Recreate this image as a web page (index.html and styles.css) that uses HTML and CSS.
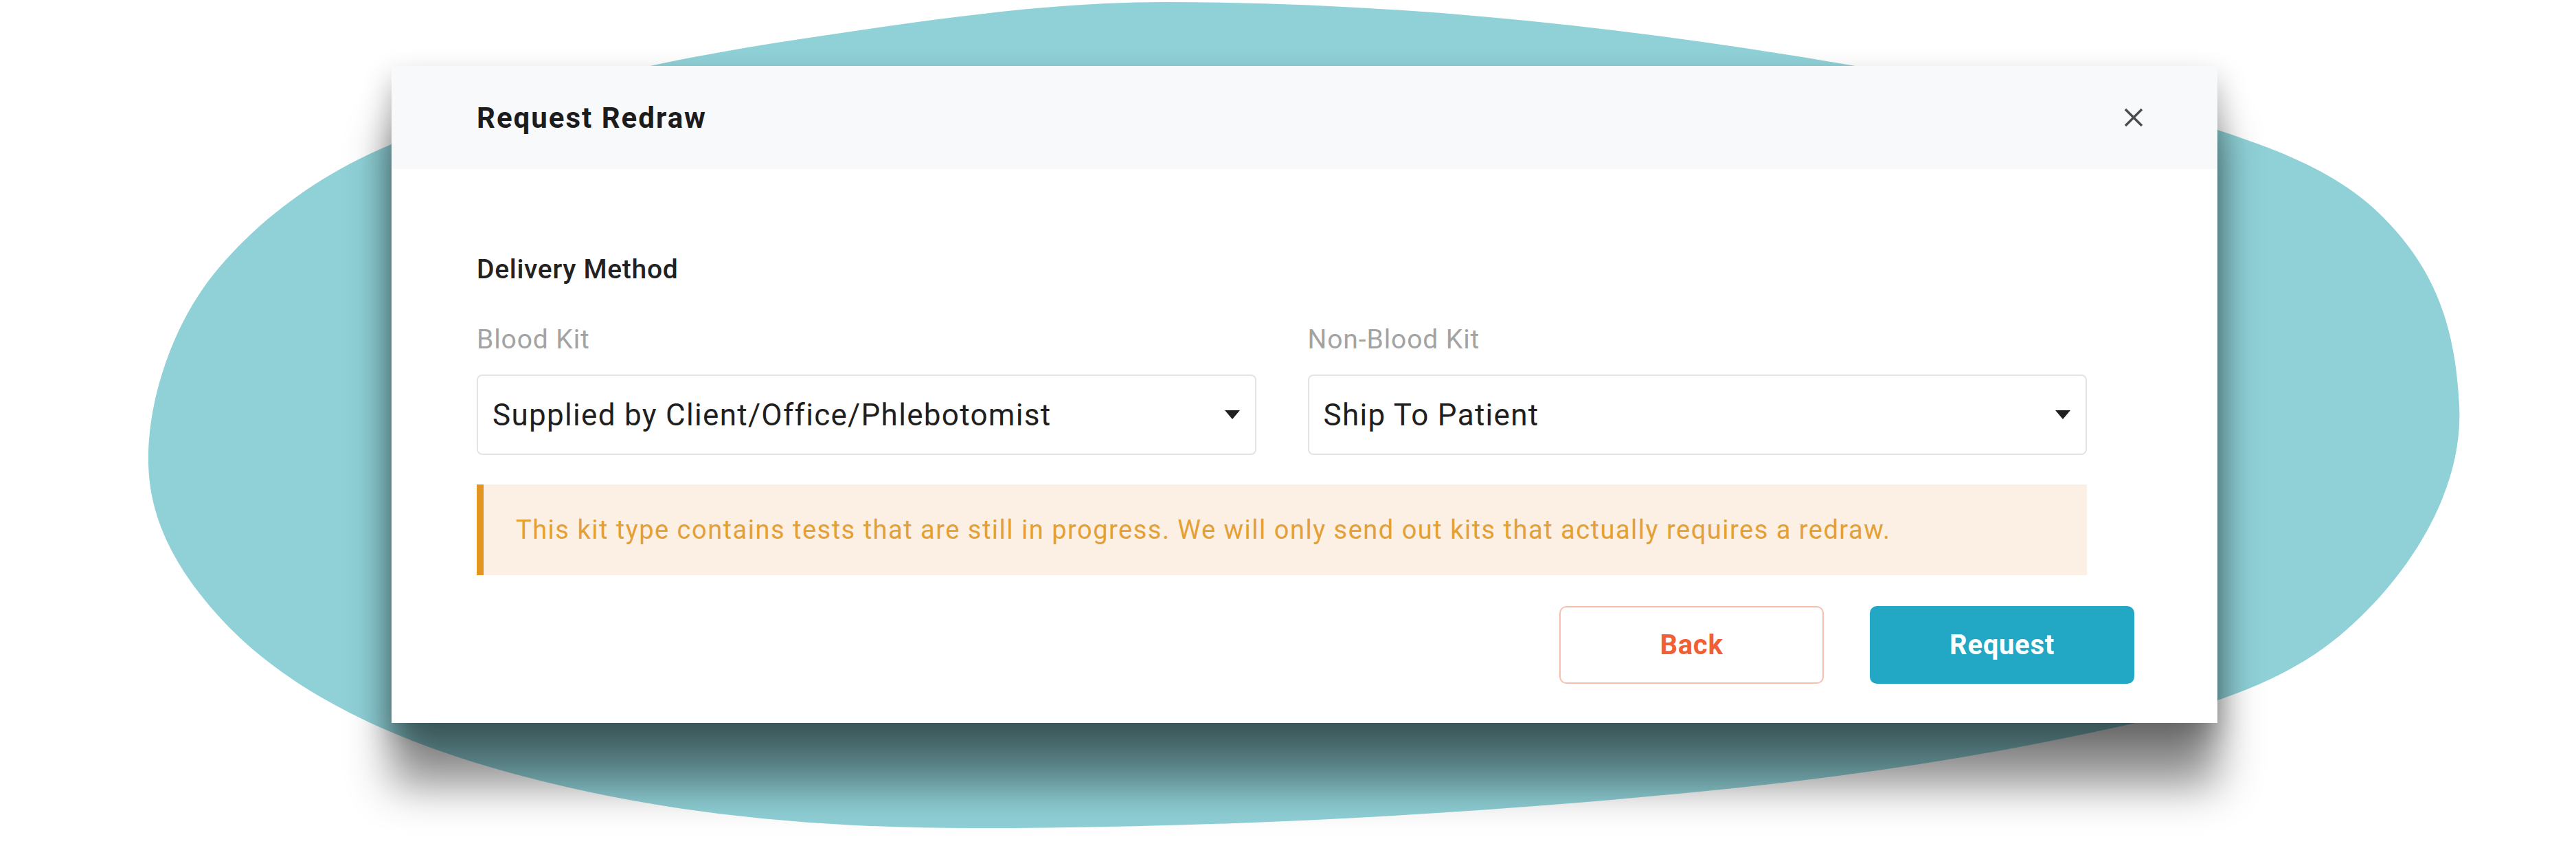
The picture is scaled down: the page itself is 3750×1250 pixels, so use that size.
FILE: index.html
```html
<!DOCTYPE html>
<html lang="en">
<head>
  <meta charset="UTF-8">
  <meta name="viewport" content="width=device-width, initial-scale=1.0">
  <title>Request Redraw</title>
  <link rel="stylesheet" href="styles.css">
</head>
<body>

<div class="stage">
  <svg class="blob" width="3750" height="1250" viewBox="0 0 3750 1250" aria-hidden="true">
    <path d="M1695,3 C2034,3 2373,39 2707,97 C2880,127 3061,134 3228,189 C3313,217 3400,249 3464,311 C3546,391 3574,475 3580,590 C3587,716 3503,844 3406,925 C3305,1009 3168,1040 3040,1067 C2870,1103 2697,1129 2524,1147 C2155,1185 1785,1205 1414,1205 C1196,1205 974,1186 763,1130 C600,1087 427,1019 315,893 C259,830 218,760 216,675 C214,580 253,471 311,399 C379,315 472,250 572,209 C761,132 962,87 1164,57 C1340,31 1517,3 1695,3 Z"/>
  </svg>

  <div class="modal">
    <div class="modal-header">
      <h2>Request Redraw</h2>
      <button class="close" aria-label="Close">
        <svg width="30" height="30" viewBox="0 0 30 30">
          <path d="M3 3 L27 27 M27 3 L3 27"/>
        </svg>
      </button>
    </div>

    <div class="modal-body">
      <div class="fields">
        <h3 class="section-title">Delivery Method</h3>

        <div class="kit-row">
          <div class="kit-field">
            <label>Blood Kit</label>
            <div class="select">
              <span>Supplied by Client/Office/Phlebotomist</span>
              <span class="caret"></span>
            </div>
          </div>
          <div class="kit-field">
            <label>Non-Blood Kit</label>
            <div class="select">
              <span>Ship To Patient</span>
              <span class="caret"></span>
            </div>
          </div>
        </div>

        <div class="alert">This kit type contains tests that are still in progress. We will only send out kits that actually requires a redraw.</div>
      </div>

      <div class="actions">
        <button class="btn btn-back">Back</button>
        <button class="btn btn-request">Request</button>
      </div>
    </div>
  </div>
</div>

</body>
</html>
```

FILE: styles.css
```css
body {
  margin: 0;
  padding: 0;
  background-color: #fff;
  font-family: Roboto, "Liberation Sans", Arial, sans-serif;
}

.stage {
  position: relative;
  width: 3750px;
  height: 1250px;
  overflow: hidden;
  box-sizing: border-box;
  padding: 96px 0 0 570px;
}

.blob {
  position: absolute;
  left: 0;
  top: 0;
}

.blob path {
  fill: #8fd1d7;
}

.modal {
  position: relative;
  width: 2658px;
  background-color: #fff;
  box-shadow: 0 20px 40px rgba(0, 0, 0, 0.3), 0 90px 60px rgba(0, 0, 0, 0.45);
}

.modal-header {
  height: 150px;
  display: flex;
  align-items: center;
  justify-content: space-between;
  padding: 0 107px 0 124px;
  background-color: #f8f9fb;
}

.modal-header h2 {
  margin: 0;
  font-size: 42px;
  letter-spacing: 2px;
  font-weight: 700;
  color: #1c1c1c;
}

.close {
  padding: 0;
  border: none;
  background: none;
  width: 30px;
  height: 30px;
  cursor: pointer;
}

.close path {
  stroke: #4d4d4d;
  stroke-width: 3.5;
  fill: none;
}

.modal-body {
  padding: 123px 121px 57px 124px;
}

.fields {
  width: 2344px;
}

.section-title {
  margin: 0 0 56px;
  font-size: 39px;
  line-height: 46px;
  letter-spacing: 0.7px;
  font-weight: 500;
  color: #222;
}

.kit-row {
  display: grid;
  grid-template-columns: 1fr 1fr;
  column-gap: 75px;
}

.kit-field label {
  display: block;
  font-size: 39px;
  line-height: 46px;
  letter-spacing: 0.9px;
  color: #a3a3a3;
  margin-bottom: 28px;
}

.select {
  height: 117px;
  box-sizing: border-box;
  border: 2px solid #e4e4e4;
  border-radius: 8px;
  display: flex;
  align-items: center;
  justify-content: space-between;
  padding: 0 22px 0 21px;
  font-size: 44px;
  letter-spacing: 1.3px;
  color: #1f1f1f;
}

.caret {
  width: 0;
  height: 0;
  border-left: 11px solid transparent;
  border-right: 11px solid transparent;
  border-top: 13px solid #1f1f1f;
}

.alert {
  margin-top: 43px;
  height: 132px;
  box-sizing: border-box;
  display: flex;
  align-items: center;
  padding-left: 47px;
  border-left: 10px solid #e2961f;
  background-color: #fcefe3;
  color: #e4a035;
  font-size: 38px;
  letter-spacing: 1.5px;
}

.actions {
  display: flex;
  justify-content: flex-end;
  gap: 67px;
  margin-top: 45px;
}

.btn {
  width: 385px;
  height: 113px;
  border-radius: 10px;
  font-family: inherit;
  font-size: 40px;
  letter-spacing: 0.7px;
  font-weight: 700;
  cursor: pointer;
}

.btn-back {
  background-color: #fff;
  border: 2px solid #f8bfae;
  color: #f15f36;
}

.btn-request {
  background-color: #22a8c4;
  border: none;
  color: #fff;
}
```
